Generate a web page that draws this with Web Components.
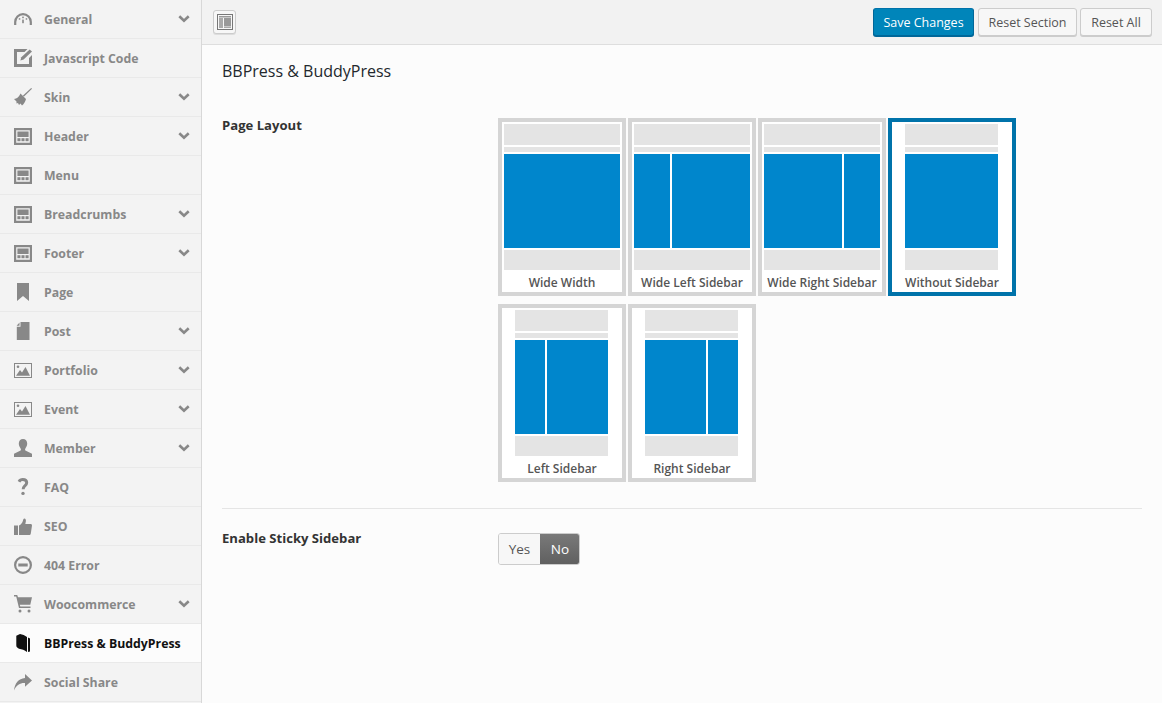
<!DOCTYPE html>
<html lang="en">
<head>
<meta charset="utf-8">
<title>BBPress &amp; BuddyPress</title>
<style>
html,body{margin:0;padding:0;height:703px;overflow:hidden;background:#fcfcfc;font-family:"Open Sans","Liberation Sans",sans-serif;}
</style>
</head>
<body>
<options-panel>
  <side-nav slot="nav">
    <nav-item icon="gauge" chevron>General</nav-item>
    <nav-item icon="edit">Javascript Code</nav-item>
    <nav-item icon="broom" chevron>Skin</nav-item>
    <nav-item icon="layout" chevron>Header</nav-item>
    <nav-item icon="layout">Menu</nav-item>
    <nav-item icon="layout" chevron>Breadcrumbs</nav-item>
    <nav-item icon="layout" chevron>Footer</nav-item>
    <nav-item icon="bookmark">Page</nav-item>
    <nav-item icon="doc" chevron>Post</nav-item>
    <nav-item icon="picture" chevron>Portfolio</nav-item>
    <nav-item icon="picture" chevron>Event</nav-item>
    <nav-item icon="user" chevron>Member</nav-item>
    <nav-item icon="question">FAQ</nav-item>
    <nav-item icon="thumb">SEO</nav-item>
    <nav-item icon="minus">404 Error</nav-item>
    <nav-item icon="cart" chevron>Woocommerce</nav-item>
    <nav-item icon="book" active>BBPress &amp; BuddyPress</nav-item>
    <nav-item icon="share">Social Share</nav-item>
  </side-nav>
  <top-bar slot="top">
    <action-button kind="primary" style="width:101px">Save Changes</action-button>
    <action-button style="width:99px">Reset Section</action-button>
    <action-button style="width:72px">Reset All</action-button>
  </top-bar>
  <section-title slot="main">BBPress &amp; BuddyPress</section-title>
  <setting-row slot="main" label="Page Layout" offset="2">
    <tile-grid>
      <layout-tile kind="wide">Wide Width</layout-tile>
      <layout-tile kind="wide" side="left">Wide Left Sidebar</layout-tile>
      <layout-tile kind="wide" side="right">Wide Right Sidebar</layout-tile>
      <layout-tile selected>Without Sidebar</layout-tile>
      <layout-tile side="left">Left Sidebar</layout-tile>
      <layout-tile side="right">Right Sidebar</layout-tile>
    </tile-grid>
  </setting-row>
  <setting-row slot="main" label="Enable Sticky Sidebar" offset="4" divided>
    <yes-no></yes-no>
  </setting-row>
</options-panel>

<script>
const ICONS = {
  gauge:'<path d="M1.200 12V9a7.800 7.800 0 0 1 15.600 0v3" fill="none" stroke="currentColor" stroke-width="2.200"/><rect x="8.200" y="3.600" width="1.600" height="1.600"/><rect x="8.200" y="6.600" width="1.600" height="3.600"/><rect x="4.800" y="5.200" width="1.500" height="1.500"/><rect x="11.700" y="5.200" width="1.500" height="1.500"/>',
  edit:'<path d="M0 0h13.500l-3 3H3v12h12V9l3-3v12H0z"/><path d="M15.700.4 18 2.600 9.600 10.600l-3.200 1 .9-3.300z"/>',
  broom:'<path d="M17.200 0 18 .8 9.800 8.800 8.800 7.800z"/><path d="M6.500 5.500 12 11C11.500 13 10 16 8 17.500L6.500 15.500 5 17 4 15 2.500 15.500V13.500L0 11C3 11 5 8.500 6.500 5.500z"/>',
  layout:'<path fill-rule="evenodd" d="M0 0h18v17H0zM2.200 2.200v12.600h13.600V2.200z"/><rect x="3.400" y="3.500" width="11.200" height="5.500"/><rect x="3.400" y="10.200" width="3.100" height="3"/><rect x="7.450" y="10.200" width="3.100" height="3"/><rect x="11.500" y="10.200" width="3.100" height="3"/>',
  bookmark:'<path d="M3 0h12v18l-6-5-6 5z"/>',
  doc:'<path d="M6.500 0H15.500v18H2.800V4.700h3.700z"/><path d="M5.500.6v3.100H2.600z"/>',
  picture:'<path fill-rule="evenodd" d="M0 1h18v15H0zM1 2v13h16V2z"/><circle cx="4" cy="4.800" r="1.300"/><path d="M2 13.800 6 8l2 2.400L11.500 5l4.500 8.800z"/>',
  user:'<path d="M9 0c2.600 0 4.200 2 4.200 4.600 0 2-.9 3.700-1.800 4.800-.6.800-.4 1.900.5 2.300L18 14.800V18H0v-3.200l6.100-3.100c.9-.4 1.100-1.500.5-2.300C5.700 8.300 4.800 6.600 4.800 4.600 4.800 2 6.400 0 9 0z"/>',
  question:'<path d="M5 3.700C5.800 2.300 7.200 1.600 8.800 1.600c2.300 0 3.900 1.200 3.900 3.200 0 1.700-1 2.500-2.100 3.400-.9.800-1.400 1.400-1.400 3" fill="none" stroke="currentColor" stroke-width="3"/><rect x="7.300" y="13.700" width="3.400" height="3.400" rx="1.700"/>',
  thumb:'<rect x="0" y="7.500" width="4" height="9.500"/><path d="M5 7.500c2-1 3.300-2.500 4-5 .2-1 .5-2 1.300-2 1.400 0 1.900 1.700 1.500 3.300L11.300 6H16.600C17.500 6 18 6.700 18 7.500L16.800 15.500C16.600 16.500 16 17 15 17H5z"/>',
  minus:'<circle cx="9" cy="9" r="7.900" fill="none" stroke="currentColor" stroke-width="2.200"/><rect x="4.300" y="7.500" width="9.400" height="3"/>',
  cart:'<path d="M0 0H3.200L4 2.200H18L16.300 9.800H5.800L6.300 11.500H16.500V13H5L2.200 1.500H0z"/><circle cx="6" cy="16" r="1.500"/><circle cx="15" cy="16" r="1.500"/>',
  book:'<path d="M2.300 1.800 6 0c2.500.300 5 1.500 7 3v15c-2.500-1.800-5-3-8-3.300-1.700-.6-2.800-1.700-2.700-3.400z"/><path d="M14 3.500l2 1V17.500l-2 .5z"/>',
  share:'<path d="M11 0l7 6.500-7 6.200V9C6.500 8.700 2.500 10.500 0 16.500 .7 9.500 4.500 4.500 11 4z"/>'
};
const ICON_BOX = {gauge:[18,12],edit:[18,18],broom:[18,18],layout:[18,17],bookmark:[18,18],doc:[18,18],picture:[18,17],user:[18,18],question:[18,18],thumb:[18,17],minus:[18,18],cart:[18,18],book:[18,18],share:[18,17]};

class OptionsPanel extends HTMLElement{
  constructor(){super();this.attachShadow({mode:'open'}).innerHTML=`<style>
    :host{display:grid;grid-template-columns:202px 960px;width:1162px;height:703px;overflow:hidden;color:#23282d}
    .main{display:flex;flex-direction:column;min-width:0}
    .body{padding:0 20px;display:flex;flex-direction:column}
  </style>
  <slot name="nav"></slot>
  <div class="main"><slot name="top"></slot><div class="body"><slot name="main"></slot></div></div>`;}
}
class SideNav extends HTMLElement{
  constructor(){super();this.attachShadow({mode:'open'}).innerHTML=`<style>
    :host{display:flex;flex-direction:column;background:#f3f3f3;border-right:1px solid #d8d8d8;box-sizing:border-box;width:202px;height:703px;overflow:hidden}
  </style><slot></slot>`;}
}
class NavItem extends HTMLElement{
  constructor(){super();
    const name=this.getAttribute('icon'), box=ICON_BOX[name];
    const chev=this.hasAttribute('chevron')?'<svg class="chev" width="12" height="8" viewBox="0 0 12 8"><path d="M1.300 1.200 6 5.700l4.700-4.500" fill="none" stroke="currentColor" stroke-width="2.600"/></svg>':'';
    this.attachShadow({mode:'open'}).innerHTML=`<style>
    :host{display:flex;align-items:center;flex:none;height:39px;box-sizing:border-box;border-bottom:1px solid #e9e9e9;padding-left:14px;color:#888;font:700 12.300px/18px "Open Sans","Liberation Sans",sans-serif}
    :host([active]){background:#fcfcfc;color:#111}
    .ic{width:18px;height:18px;margin-right:12px;flex:none;display:flex;align-items:center;justify-content:center}
    svg{display:block;fill:currentColor}
    .t{flex:1;white-space:nowrap;padding-top:1px}
    .chev{margin-right:11px;flex:none}
    </style><span class="ic"><svg width="${box[0]}" height="${box[1]}" viewBox="0 0 18 ${box[1]}">${ICONS[name]}</svg></span><span class="t"><slot></slot></span>${chev}`;
  }
}
class TopBar extends HTMLElement{
  constructor(){super();this.attachShadow({mode:'open'}).innerHTML=`<style>
    :host{display:flex;align-items:center;height:45px;box-sizing:border-box;background:#f2f2f2;border-bottom:1px solid #dedede;padding:0 10px 0 11px;gap:3px}
    .tog{width:23px;height:24px;box-sizing:border-box;border:1px solid #ccc;border-radius:3px;background:#f7f7f7;display:flex;align-items:center;justify-content:center;margin-right:auto;box-shadow:0 1px 0 #ddd}
    svg{display:block}
    ::slotted(action-button:first-of-type){margin-right:1px}
    </style><span class="tog"><svg width="16" height="16" viewBox="0 0 16 16"><rect x=".5" y=".5" width="15" height="15" fill="#f7f7f7" stroke="#777"/><rect x="2" y="2" width="12" height="1.500" fill="#999"/><rect x="2" y="4" width="4" height="10" fill="#aaa"/><rect x="7" y="4" width="7" height="8.500" fill="#999"/><rect x="7" y="13" width="7" height="1" fill="#aaa"/></svg></span><slot></slot>`;}
}
class ActionButton extends HTMLElement{
  constructor(){super();this.attachShadow({mode:'open'}).innerHTML=`<style>
    :host{display:flex;align-items:center;justify-content:center;height:28px;box-sizing:border-box;padding:1px 0 0;border:1px solid #ccc;border-radius:3px;background:#f7f7f7;color:#555;font:400 12.500px/18px "Open Sans","Liberation Sans",sans-serif;box-shadow:0 1px 0 #ccc;white-space:nowrap}
    :host([kind=primary]){background:#0085ba;border-color:#0073aa #006799 #006799;color:#fff;box-shadow:0 1px 0 #006799}
    </style><slot></slot>`;}
}
class SectionTitle extends HTMLElement{
  constructor(){super();this.attachShadow({mode:'open'}).innerHTML=`<style>
    :host{display:block;font:400 16px/22px "Open Sans","Liberation Sans",sans-serif;color:#23282d;padding-top:15px;height:56px;box-sizing:content-box}
    </style><slot></slot>`;}
}
class SettingRow extends HTMLElement{
  constructor(){super();
    const off=this.getAttribute('offset')||0;
    this.attachShadow({mode:'open'}).innerHTML=`<style>
    :host{display:grid;grid-template-columns:276px 1fr;align-items:start}
    :host([divided]){border-top:1px solid #e5e5e5;margin-top:26px;padding-top:20px}
    .l{font:700 13.100px/18px "Open Sans","Liberation Sans",sans-serif;color:#333}
    .c{padding-top:${off}px}
    </style><div class="l">${this.getAttribute('label')}</div><div class="c"><slot></slot></div>`;}
}
class TileGrid extends HTMLElement{
  constructor(){super();this.attachShadow({mode:'open'}).innerHTML=`<style>
    :host{display:grid;grid-template-columns:repeat(4,128px);column-gap:2px;row-gap:8px}
    </style><slot></slot>`;}
}
class LayoutTile extends HTMLElement{
  constructor(){super();
    const wide=this.hasAttribute('kind'), side=this.getAttribute('side');
    const widths = wide ? {left:[36,78],right:[78,36]} : {left:[30,61],right:[61,30]};
    const cols = side ? `<i style="width:${widths[side][0]}px"></i><i style="width:${widths[side][1]}px"></i>` : `<i style="flex:1"></i>`;
    this.attachShadow({mode:'open'}).innerHTML=`<style>
    :host{display:flex;flex-direction:column;width:128px;height:178px;box-sizing:border-box;border:4px solid #d5d5d5;background:#fff;padding-top:2px}
    :host([selected]){border-color:#0073aa}
    .img{display:flex;flex-direction:column;gap:2px;margin:${wide?'0 2px':'0 14px 0 13px'}}
    .bar{background:#e4e4e4;display:block}
    .h{height:21px}.s{height:5px}.f{height:20px}
    .m{display:flex;gap:2px;height:94px}
    .m i{display:block;background:#0086cc}
    .lab{font:600 12px/24px "Open Sans","Liberation Sans",sans-serif;color:#555;text-align:center;white-space:nowrap;padding-top:1px}
    </style><div class="img"><span class="bar h"></span><span class="bar s"></span><div class="m">${cols}</div><span class="bar f"></span></div><div class="lab"><slot></slot></div>`;}
}
class YesNo extends HTMLElement{
  constructor(){super();this.attachShadow({mode:'open'}).innerHTML=`<style>
    :host{display:inline-flex;height:32px;box-sizing:border-box;border:1px solid #ccc;border-radius:3px;overflow:hidden;font:400 13.500px/30px "Open Sans","Liberation Sans",sans-serif}
    span{display:block;text-align:center}
    .y{width:41px;background:#f7f7f7;color:#555}
    .n{width:40px;background:linear-gradient(#7a7a7a,#5f5f5f);color:#fff;margin:-1px -1px -1px 0;line-height:32px}
    </style><span class="y">Yes</span><span class="n">No</span>`;}
}
customElements.define('options-panel',OptionsPanel);
customElements.define('side-nav',SideNav);
customElements.define('nav-item',NavItem);
customElements.define('top-bar',TopBar);
customElements.define('action-button',ActionButton);
customElements.define('section-title',SectionTitle);
customElements.define('setting-row',SettingRow);
customElements.define('tile-grid',TileGrid);
customElements.define('layout-tile',LayoutTile);
customElements.define('yes-no',YesNo);
</script>
</body>
</html>
